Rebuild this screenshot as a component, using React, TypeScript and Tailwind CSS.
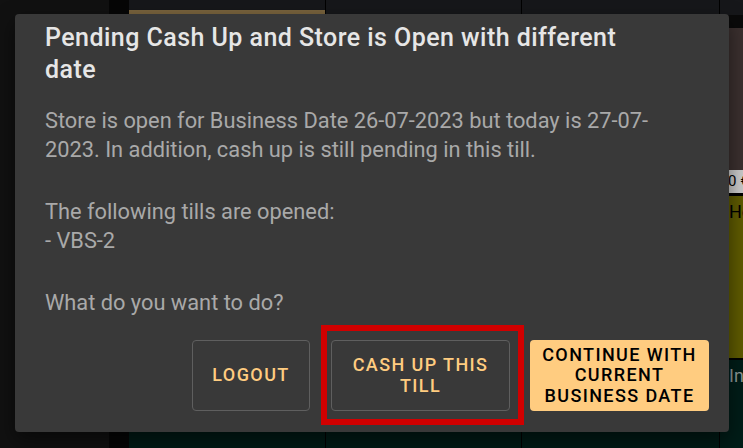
import React from "react";

function Backdrop() {
  return (
    <div className="flex h-full w-full">
      <div className="w-[109px] shrink-0 bg-[#111111]" />
      <div className="w-[20px] shrink-0 bg-[#060606]" />
      <div className="flex flex-1 gap-px bg-black">
        <div className="flex w-[196px] shrink-0 flex-col">
          <div className="h-[15px] bg-[#16171a] pt-[10px]">
            <div className="h-[5px] bg-[#7a643e]" />
          </div>
          <div className="flex-1 bg-[#001b16]" />
        </div>
        <div className="flex w-[195px] shrink-0 flex-col">
          <div className="h-[15px] bg-[#16171a]" />
          <div className="flex-1 bg-[#001b16]" />
        </div>
        <div className="flex w-[197px] shrink-0 flex-col">
          <div className="h-[15px] bg-[#16171a]" />
          <div className="flex-1 bg-[#001b16]" />
        </div>
        <div className="flex flex-1 flex-col overflow-hidden">
          <div className="h-[15px] bg-[#16171a]" />
          <div className="h-[13px] bg-[#0a0a0a]" />
          <div className="h-[142px] bg-[#3b302f]" />
          <div className="flex h-[23px] items-center whitespace-nowrap bg-[#cbcbcb] pl-[8px] text-[15px] text-black">
            0 €
          </div>
          <div className="h-[3px] bg-black" />
          <div className="h-[162px] whitespace-nowrap bg-[#5f5b00] pl-[9px] pt-[2px] text-[18px] text-black">
            He
          </div>
          <div className="h-[2px] bg-black" />
          <div className="flex-1 whitespace-nowrap bg-[#001d18] pl-[9px] pt-[2px] text-[18px] text-[#8f9a97]">
            In
          </div>
        </div>
      </div>
    </div>
  );
}

export default function App() {
  const outlined =
    "flex h-[71px] items-center justify-center rounded-[4px] border border-[#5f5f5f] px-[10px] text-center text-[18px] font-medium uppercase leading-[20.5px] tracking-[1.4px] text-[#ffcc80]";

  return (
    <div className="relative h-[448px] w-[743px] overflow-hidden bg-[#111111] font-['Roboto',sans-serif]">
      <Backdrop />

      <div className="absolute left-[15px] top-[14px] flex h-[418px] w-[714px] flex-col rounded-[4px] bg-[#393939] pb-[21px] pl-[30px] pr-[20px] pt-[8px] shadow-[0_8px_20px_rgba(0,0,0,0.5)]">
        <h2 className="w-[612px] text-[25px] font-medium leading-[31.5px] tracking-[0.45px] text-[#e6e6e6]">
          Pending Cash Up and Store is Open with different date
        </h2>

        <div className="mt-[22px] flex w-[620px] flex-col gap-[34px] text-[21.8px] leading-[28.5px] text-[#a9a9a9]">
          <p>
            Store is open for Business Date 26-07-2023 but today is 27-07-2023. In addition, cash up is still
            pending in this till.
          </p>
          <p>
            The following tills are opened:
            <br />- VBS-2
          </p>
          <p>What do you want to do?</p>
        </div>

        <div className="mt-auto flex items-center justify-end gap-5">
          <button className={`${outlined} w-[118px]`}>Logout</button>
          <div className="relative ml-px">
            <button className={`${outlined} w-[179px]`}>Cash up this till</button>
            <div className="absolute -bottom-[14px] -left-[10px] -right-[14px] -top-[15px] border-[6px] border-[#d10000]" />
          </div>
          <button className="flex h-[71px] w-[179px] items-center justify-center rounded-[4px] bg-[#ffcc80] px-[10px] text-center text-[18px] font-medium uppercase leading-[20.5px] tracking-[1.4px] text-black">
            Continue with current business date
          </button>
        </div>
      </div>
    </div>
  );
}
